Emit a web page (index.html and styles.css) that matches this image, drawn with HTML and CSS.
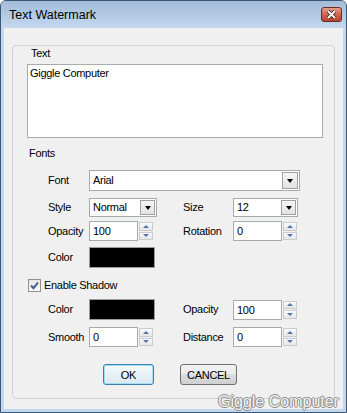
FILE: index.html
```html
<!DOCTYPE html>
<html>
    <head>
        <title>Text Watermark</title>
        <link rel="stylesheet" href="styles.css">
    </head>
    <body>
        <div class="window">
            <div class="titlebar">
                <span class="title">Text Watermark</span>
                <div class="close">
                    <svg width="21" height="15" viewBox="0 0 21 15">
                        <defs>
                            <linearGradient id="closegrad" x1="0" y1="0" x2="0" y2="1">
                                <stop offset="0" stop-color="#e9a393"/>
                                <stop offset="0.45" stop-color="#cf6a56"/>
                                <stop offset="1" stop-color="#b3412d"/>
                            </linearGradient>
                        </defs>
                        <rect x="0.5" y="0.5" width="20" height="14" rx="2.5" fill="url(#closegrad)" stroke="#6b2a22"/>
                        <path d="M7 4 L14 11 M14 4 L7 11" stroke="#4b1e18" stroke-width="3.4"/>
                        <path d="M7 4 L14 11 M14 4 L7 11" stroke="#ffffff" stroke-width="1.8"/>
                    </svg>
                </div>
            </div>

            <div class="client">
                <div class="group">
                    <div class="caption">Text</div>
                    <textarea class="textbox">Giggle Computer</textarea>

                    <div class="section">Fonts</div>

                    <div class="row row-font">
                        <span class="lbl">Font</span>
                        <div class="combo combo-font"><span>Arial</span><i class="drop"></i></div>
                    </div>

                    <div class="row row-style">
                        <span class="lbl">Style</span>
                        <div class="combo combo-style"><span>Normal</span><i class="drop"></i></div>
                        <span></span>
                        <span class="lbl">Size</span>
                        <div class="combo combo-size"><span>12</span><i class="drop"></i></div>
                    </div>

                    <div class="row row-spin">
                        <span class="lbl">Opacity</span>
                        <div class="ctl"><div class="field">100</div><div class="spin"><i class="up"></i><i class="down"></i></div></div>
                        <span></span>
                        <span class="lbl">Rotation</span>
                        <div class="ctl"><div class="field">0</div><div class="spin"><i class="up"></i><i class="down"></i></div></div>
                    </div>

                    <div class="row row-color">
                        <span class="lbl">Color</span>
                        <div class="swatch"></div>
                    </div>

                    <div class="check">
                        <span class="box">
                            <svg width="13" height="13" viewBox="0 0 13 13">
                                <path d="M3 6.5 L5.5 9.2 L10 3.5" fill="none" stroke="#3f5d91" stroke-width="2"/>
                            </svg>
                        </span>
                        <span>Enable Shadow</span>
                    </div>

                    <div class="row row-shadow">
                        <span class="lbl">Color</span>
                        <div class="swatch"></div>
                        <span></span>
                        <span class="lbl">Opacity</span>
                        <div class="ctl"><div class="field">100</div><div class="spin"><i class="up"></i><i class="down"></i></div></div>
                    </div>

                    <div class="row row-smooth">
                        <span class="lbl">Smooth</span>
                        <div class="ctl"><div class="field">0</div><div class="spin"><i class="up"></i><i class="down"></i></div></div>
                        <span></span>
                        <span class="lbl">Distance</span>
                        <div class="ctl"><div class="field">0</div><div class="spin"><i class="up"></i><i class="down"></i></div></div>
                    </div>

                    <div class="buttons">
                        <button class="btn btn-ok">OK</button>
                        <button class="btn btn-cancel">CANCEL</button>
                    </div>
                </div>
            </div>

            <!-- watermark laid over the window corner -->
            <div class="stamp">Giggle Computer</div>
        </div>
    </body>
</html>
```

FILE: styles.css
```css
html, body {
    margin: 0;
    padding: 0;
}

body {
    width: 347px;
    height: 413px;
    overflow: hidden;
    background: #ffffff;
    font-family: "Liberation Sans", Arial, sans-serif;
    font-size: 11px;
    letter-spacing: -0.3px;
    line-height: 13px;
    color: #000;
}

.window {
    position: relative;
    box-sizing: border-box;
    width: 347px;
    height: 413px;
    border: 1px solid #3b5677;
    border-radius: 6px 6px 0 0;
    background: #c3d7ef;
    display: flex;
    flex-direction: column;
}

.titlebar {
    box-sizing: border-box;
    height: 27px;
    padding: 1px 4px 0 8px;
    display: flex;
    align-items: center;
    justify-content: space-between;
    background: linear-gradient(#a2bbd8, #c4d8ef);
    border-radius: 5px 5px 0 0;
}

.title {
    font-size: 12.5px;
    letter-spacing: 0;
    color: #000;
}

.close {
    width: 21px;
    height: 15px;
    margin-top: -1px;
}
.close svg {
    display: block;
}

.client {
    flex: 1;
    box-sizing: border-box;
    margin: 0 3px 3px 3px;
    padding: 17px 8px 10px 8px;
    background: #f0f0f0;
    display: flex;
}

.group {
    flex: 1;
    border: 1px solid #d2d2d2;
    border-radius: 4px;
    display: flex;
    flex-direction: column;
    align-items: flex-start;
}

.caption {
    margin: 1px 0 0 18px;
}

.textbox {
    box-sizing: border-box;
    width: 296px;
    height: 74px;
    margin: 4px 0 0 14px;
    padding: 2px 2px;
    border: 1px solid #a9abae;
    background: #fff;
    resize: none;
    overflow: hidden;
    font-family: "Liberation Sans", Arial, sans-serif;
    font-size: 11px;
    letter-spacing: -0.3px;
    line-height: 13px;
    color: #000;
    outline: none;
}

.section {
    margin: 9px 0 0 16px;
}

.row {
    display: grid;
    grid-template-columns: 41px 68px 26px 50px 67px;
    align-items: center;
    margin-left: 35px;
}
.lbl {
    white-space: nowrap;
}

.row-font   { margin-top: 10px; height: 21px; }
.row-style  { margin-top: 7px;  height: 19px; }
.row-spin   { margin-top: 4px;  height: 20px; }
.row-color  { margin-top: 6px;  height: 21px; }
.row-shadow { margin-top: 7px;  height: 21px; }
.row-smooth { margin-top: 7px;  height: 20px; }

.combo {
    box-sizing: border-box;
    height: 19px;
    padding-left: 3px;
    border: 1px solid #a5a9ae;
    background: #fff;
    display: flex;
    align-items: center;
    justify-content: space-between;
}
.combo-font {
    grid-column: 2 / 6;
    width: 211px;
    height: 21px;
}
.combo-style {
    width: 68px;
}
.combo-size {
    width: 65px;
}

.drop {
    box-sizing: border-box;
    width: 15px;
    height: 15px;
    margin-right: 1px;
    border: 1px solid #a0a0a0;
    background: linear-gradient(#f6f6f6, #e2e2e2);
    display: flex;
    align-items: center;
    justify-content: center;
}
.combo-font .drop {
    width: 16px;
    height: 17px;
}
.drop::after {
    content: "";
    border-top: 4px solid #000;
    border-left: 3.5px solid transparent;
    border-right: 3.5px solid transparent;
    margin-top: 1px;
}

.ctl {
    display: flex;
    height: 20px;
}
.field {
    box-sizing: border-box;
    width: 49px;
    height: 20px;
    padding-left: 3px;
    border: 1px solid #a9abae;
    background: #fff;
    line-height: 18px;
}
.spin {
    box-sizing: border-box;
    width: 16px;
    height: 20px;
    padding: 1px 1px 1px 1px;
    display: flex;
    flex-direction: column;
    gap: 1px;
}
.spin i {
    flex: 1;
    border: 1px solid #c9cdd3;
    background: linear-gradient(#fbfbfb, #e6e6e6);
    display: flex;
    align-items: center;
    justify-content: center;
}
.spin .up::after {
    content: "";
    border-bottom: 3px solid #5474aa;
    border-left: 3px solid transparent;
    border-right: 3px solid transparent;
}
.spin .down::after {
    content: "";
    border-top: 3px solid #5474aa;
    border-left: 3px solid transparent;
    border-right: 3px solid transparent;
}

.swatch {
    box-sizing: border-box;
    width: 66px;
    height: 21px;
    border: 1px solid #9c9c9c;
    background: #000;
}

.check {
    margin: 11px 0 0 15px;
    height: 13px;
    display: flex;
    align-items: center;
    gap: 3px;
}
.check .box {
    box-sizing: border-box;
    width: 13px;
    height: 13px;
    border: 1px solid #8e8f8f;
    background: linear-gradient(#e6e6e6, #fbfbfb);
}
.check .box svg {
    display: block;
    margin: -1px 0 0 -1px;
}

.buttons {
    margin: 17px 0 0 90px;
    display: flex;
    gap: 26px;
}
.btn {
    box-sizing: border-box;
    height: 21px;
    padding: 0;
    border-radius: 3px;
    font-family: "Liberation Sans", Arial, sans-serif;
    font-size: 11px;
    letter-spacing: -0.3px;
    color: #000;
}
.btn-ok {
    width: 51px;
    border: 1px solid #3c7fb1;
    box-shadow: inset 0 0 0 1px #9fe0f8;
    background: linear-gradient(#f4f9fc, #dbe9f2);
}
.btn-cancel {
    width: 57px;
    border: 1px solid #707070;
    background: linear-gradient(#f2f2f2, #ebebeb 50%, #dddddd 50%, #cfcfcf);
}

.stamp {
    position: absolute;
    left: 217px;
    top: 392px;
    font-size: 16px;
    line-height: 18px;
    letter-spacing: 0;
    color: #f3f3f3;
    text-shadow: 1px 0 0 #8c8c8c, -1px 0 0 #8c8c8c, 0 1px 0 #8c8c8c, 0 -1px 0 #8c8c8c;
    white-space: nowrap;
}
```
